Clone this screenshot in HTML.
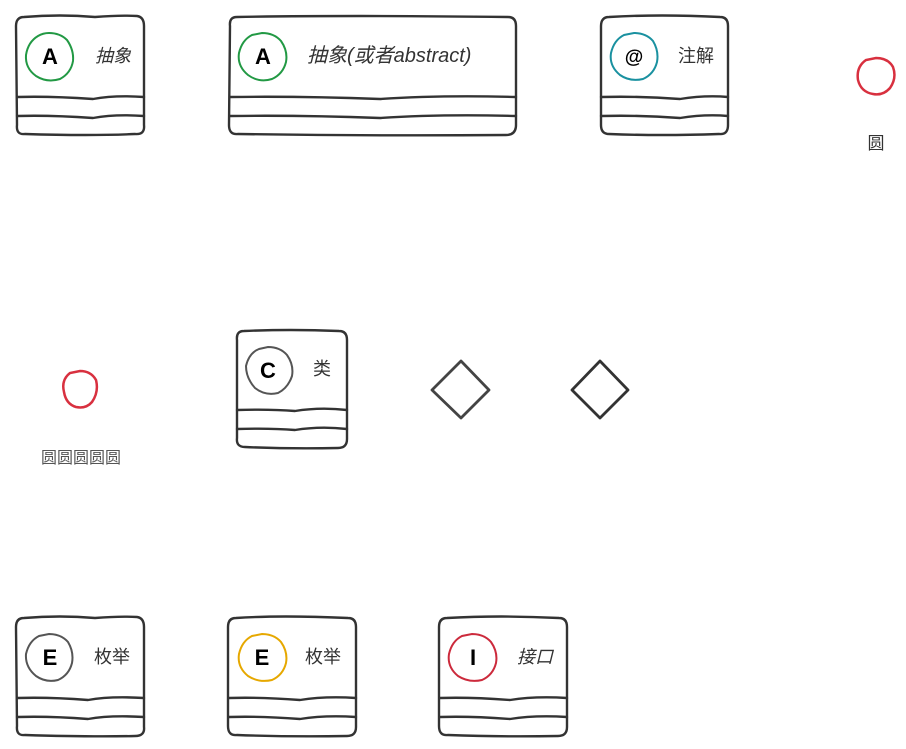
<!DOCTYPE html>
<html><head><meta charset="utf-8"><style>
html,body{margin:0;padding:0;background:#fff;}
svg{display:block;}
text{font-family:"Liberation Sans","Noto Sans CJK SC",sans-serif;}
</style></head><body>
<svg width="906" height="749" viewBox="0 0 906 749" xmlns="http://www.w3.org/2000/svg">
<g fill="none" stroke="#333" stroke-width="2.4" stroke-linecap="round" stroke-linejoin="round">
<path d="M24 17 Q60 14 95 17 Q120 15 137 16 Q144 17 144 26 L144 125 Q145 135 135 134 Q90 136 25 134 Q16 135 17 125 L16 26 Q16 17 24 17Z"/>
<path d="M17 97 Q50 96 93 99 Q115 95 144 97"/><path d="M17 116 Q50 115 93 118 Q115 114 144 116"/>
<path d="M237 17 Q350 15 508 17 Q516 17 516 26 L516 125 Q516 135 506 135 Q370 136 238 134 Q229 135 229 125 L230 26 Q229 17 237 17Z"/>
<path d="M230 97 Q300 96 380 99 Q440 95 516 97"/><path d="M230 116 Q300 115 380 118 Q440 114 516 116"/>
<path d="M609 17 Q660 14 720 17 Q728 17 728 26 L728 125 Q728 135 719 134 Q660 136 609 134 Q601 134 601 125 L601 26 Q601 17 609 17Z"/>
<path d="M601 97 Q640 96 680 99 Q705 95 728 97"/><path d="M601 116 Q640 115 680 118 Q705 114 728 116"/>
<path d="M244 331 Q290 329 339 331 Q347 331 347 340 L347 439 Q347 448 338 448 Q290 449 245 447 Q236 447 237 438 L237 340 Q236 331 244 331Z"/>
<path d="M237 410 Q270 409 295 411 Q320 407 347 410"/><path d="M237 429 Q270 428 295 430 Q320 426 347 429"/>
<path d="M24 618 Q60 615 95 618 Q120 616 137 617 Q144 618 144 627 L144 727 Q145 736 135 736 Q90 737 25 735 Q16 736 17 726 L16 627 Q16 618 24 618Z"/>
<path d="M17 698 Q50 697 88 700 Q110 696 144 698"/><path d="M17 717 Q50 716 88 719 Q110 715 144 717"/>
<path d="M236 618 Q280 615 348 618 Q356 618 356 627 L356 727 Q356 736 347 736 Q290 737 237 735 Q228 736 228 726 L228 627 Q228 618 236 618Z"/>
<path d="M229 698 Q260 697 300 700 Q325 696 356 698"/><path d="M229 717 Q260 716 300 719 Q325 715 356 717"/>
<path d="M447 618 Q500 615 559 618 Q567 618 567 627 L567 727 Q567 736 558 736 Q500 737 448 735 Q439 736 439 726 L439 627 Q439 618 447 618Z"/>
<path d="M440 698 Q470 697 510 700 Q535 696 567 698"/><path d="M440 717 Q470 716 510 719 Q535 715 567 717"/>
<path d="M461 361 L489 390 L461 418 L432 390 Z" stroke="#444" stroke-width="2.8"/>
<path d="M600 361 L628 390 L600 418 L572 390 Z" stroke-width="2.8"/>
</g>
<g fill="none" stroke-width="2">
<path d="M49 33 Q60 33 67 40 Q74 50 73 61 Q71 73 60 79 Q47 83 36 76 Q25 68 26 55 Q28 42 38 36 Q43 33 49 33Z" stroke="#229944"/>
<path d="M262 33 Q274 33 281 41 Q288 51 286 62 Q283 74 272 79 Q259 83 248 75 Q237 66 239 53 Q242 40 252 35Z" stroke="#229944"/>
<path d="M634 33 Q646 33 653 41 Q659 51 657 62 Q654 74 643 79 Q630 82 620 75 Q609 66 611 53 Q614 40 624 35Z" stroke="#1a91a0"/>
<path d="M268 347 Q280 347 287 355 Q294 365 292 376 Q288 388 278 393 Q265 396 255 388 Q246 378 246 366 Q249 353 259 349Z" stroke="#555"/>
<path d="M49 634 Q61 634 68 642 Q74 652 72 663 Q69 675 58 680 Q46 683 36 676 Q25 667 26 654 Q29 641 39 636Z" stroke="#555"/>
<path d="M262 634 Q274 634 281 642 Q288 652 286 663 Q283 675 272 680 Q259 683 248 676 Q237 667 239 654 Q242 641 252 636Z" stroke="#e6a800"/>
<path d="M472 634 Q484 634 491 642 Q498 652 496 663 Q493 675 482 680 Q469 683 458 676 Q447 667 449 654 Q452 641 462 636Z" stroke="#cc2a3c"/>
<path d="M876 58 Q888 58 893 67 Q897 78 890 88 Q883 96 873 94 Q861 92 858 80 Q856 67 866 60Z" stroke="#d8303f" stroke-width="2.5"/>
<path d="M80 371 Q91 371 96 380 Q99 392 92 402 Q86 409 76 407 Q66 404 64 392 Q61 380 70 373Z" stroke="#d8303f" stroke-width="2.5"/>
</g>
<g font-weight="bold" font-size="22" text-anchor="middle" fill="#000" font-family="'Liberation Sans',sans-serif">
<text x="50" y="64">A</text><text x="263" y="64">A</text><text x="634" y="63" font-size="19">@</text>
<text x="268" y="378">C</text><text x="50" y="665">E</text><text x="262" y="665">E</text><text x="473" y="665">I</text>
</g>
<g font-size="18" fill="#333">
<text x="95" y="62" font-style="italic">抽象</text>
<text x="307" y="62" font-style="italic" font-size="20">抽象(或者abstract)</text>
<text x="678" y="62">注解</text>
<text x="313" y="375">类</text>
<text x="94" y="663">枚举</text>
<text x="305" y="663">枚举</text>
<text x="517" y="663" font-style="italic">接口</text>
<text x="876" y="149" text-anchor="middle" font-size="17">圆</text>
<text x="81" y="463" text-anchor="middle" font-size="16" fill="#555">圆圆圆圆圆</text>
</g>
</svg>
</body></html>
